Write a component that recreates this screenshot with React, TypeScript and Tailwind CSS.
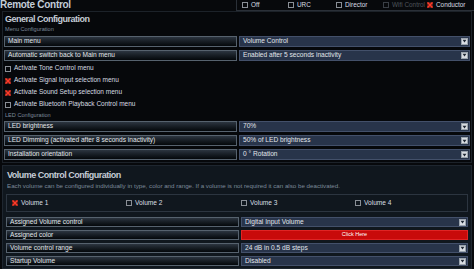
import React from 'react'

const font = { fontFamily: '"Liberation Sans", Arial, sans-serif' }

function Box({ checked = false, dim = false }: { checked?: boolean; dim?: boolean }) {
  if (checked) {
    return (
      <svg width="6" height="6" viewBox="0 0 6 6" className="shrink-0">
        <rect x="0" y="0" width="6" height="6" fill="#5a1c18" />
        <path d="M0.5 0.5 L5.5 5.5 M5.5 0.5 L0.5 5.5" stroke="#ff3a28" strokeWidth="1.5" />
      </svg>
    )
  }
  return <span className={`w-[6px] h-[6px] shrink-0 border ${dim ? 'border-[#3a3f46]' : 'border-[#8a8f96]'}`} />
}

function Arrow() {
  return (
    <span className="w-[7px] h-[7px] bg-[#d8dce2] border border-[#9aa3ad] flex items-center justify-center shrink-0">
      <svg width="5" height="4" viewBox="0 0 5 4">
        <path d="M0.5 0.8 L4.5 0.8 L2.5 3.5 Z" fill="#1e2632" />
      </svg>
    </span>
  )
}

function Row({ label, value, red = false, tall = true }: { label: string; value: string; red?: boolean; tall?: boolean }) {
  return (
    <div className={`flex gap-[2px] ${tall ? 'h-[11px]' : 'h-[10px]'}`}>
      <div className="w-[233px] border border-[#56626e] bg-gradient-to-b from-[#2c3540] to-[#05080b] text-[6.6px] text-[#e2e6ea] pl-[3px] flex items-center leading-none">
        {label}
      </div>
      {red ? (
        <div className="flex-1 bg-[#c80a0a] border border-[#e02424] text-[5.5px] text-white flex items-center justify-center leading-none">
          {value}
        </div>
      ) : (
        <div className="flex-1 bg-[#28344a] border border-[#43506a] text-[6.6px] text-[#e2e6ea] pl-[3px] pr-[1px] flex items-center justify-between leading-none">
          <span>{value}</span>
          <Arrow />
        </div>
      )}
    </div>
  )
}

function Check({ label, checked = false }: { label: string; checked?: boolean }) {
  return (
    <div className="flex items-center gap-[3px] h-[12px] pl-[1px] text-[6.5px] text-[#d8dde2] leading-none">
      <Box checked={checked} />
      <span>{label}</span>
    </div>
  )
}

function TopCheck({ label, w, checked = false, dim = false }: { label: string; w: string; checked?: boolean; dim?: boolean }) {
  return (
    <div className={`flex items-center gap-[3px] ${w} ${dim ? 'text-[#4e545b]' : 'text-[#d8dde2]'}`}>
      <Box checked={checked} dim={dim} />
      <span className="whitespace-nowrap">{label}</span>
    </div>
  )
}

export default function App() {
  return (
    <div className="w-[474px] h-[269px] overflow-hidden bg-[#07090c] flex flex-col" style={font}>
      <div className="flex h-[11px] items-start shrink-0">
        <div className="w-[236px] text-[10px] font-bold tracking-[-0.3px] text-[#c3cdd8] leading-none">Remote Control</div>
        <div className="flex-1 border-l border-b border-[#2a3038] h-[11px] flex items-center text-[6.4px] leading-none pl-[5px]">
          <TopCheck label="Off" w="w-[46px]" />
          <TopCheck label="URC" w="w-[48px]" />
          <TopCheck label="Director" w="w-[47px]" />
          <TopCheck label="Wifi Control" w="w-[44px]" dim />
          <TopCheck label="Conductor" w="" checked />
        </div>
      </div>

      <div className="mx-[2px] border border-[#1c2229] bg-[#06080b] px-[1px] h-[152px] shrink-0 flex flex-col">
        <div className="text-[9px] font-bold tracking-[-0.5px] text-[#c4ccd6] leading-none mt-[3px] pl-[1px]">General Configuration</div>
        <div className="text-[5.6px] text-[#7c8a9a] leading-none mt-[3px] pl-[1px]">Menu Configuration</div>
        <div className="flex flex-col gap-[3px] mt-[3px]">
          <Row label="Main menu" value="Volume Control" />
          <Row label="Automatic switch back to Main menu" value="Enabled after 5 seconds inactivity" />
        </div>
        <div className="flex flex-col mt-[2px]">
          <Check label="Activate Tone Control menu" />
          <Check label="Activate Signal Input selection menu" checked />
          <Check label="Activate Sound Setup selection menu" checked />
          <Check label="Activate Bluetooth Playback Control menu" />
        </div>
        <div className="text-[5.6px] text-[#7c8a9a] leading-none mt-[2px] pl-[1px]">LED Configuration</div>
        <div className="flex flex-col gap-[3px] mt-[3px]">
          <Row label="LED brightness" value="70%" />
          <Row label="LED Dimming (activated after 8 seconds inactivity)" value="50% of LED brightness" />
          <Row label="Installation orientation" value="0 ° Rotation" />
        </div>
      </div>

      <div className="mt-[2px] mx-[2px] flex-1 bg-[#10171e] border border-[#1e262f] px-[3px]">
        <div className="text-[9px] font-bold tracking-[-0.5px] text-[#c4ccd6] leading-none mt-[5px] pl-[1px]">Volume Control Configuration</div>
        <div className="text-[6.2px] text-[#7c8a9a] leading-none mt-[3px] whitespace-nowrap pl-[1px]">
          Each volume can be configured individually in type, color and range. If a volume is not required it can also be deactivated.
        </div>
        <div className="mt-[5px] h-[18px] border border-[#2c3540] flex items-center text-[6.6px] text-[#d8dde2] leading-none pl-[5px]">
          <div className="w-[114px] flex items-center gap-[3px]"><Box checked /><span>Volume 1</span></div>
          <div className="w-[115px] flex items-center gap-[3px]"><Box /><span>Volume 2</span></div>
          <div className="w-[114px] flex items-center gap-[3px]"><Box /><span>Volume 3</span></div>
          <div className="flex items-center gap-[3px]"><Box /><span>Volume 4</span></div>
        </div>
        <div className="mt-[5px] flex flex-col gap-[3px]">
          <Row label="Assigned Volume control" value="Digital Input Volume" tall={false} />
          <Row label="Assigned color" value="Click Here" red tall={false} />
          <Row label="Volume control range" value="24 dB in 0.5 dB steps" tall={false} />
          <Row label="Startup Volume" value="Disabled" tall={false} />
        </div>
      </div>
    </div>
  )
}
